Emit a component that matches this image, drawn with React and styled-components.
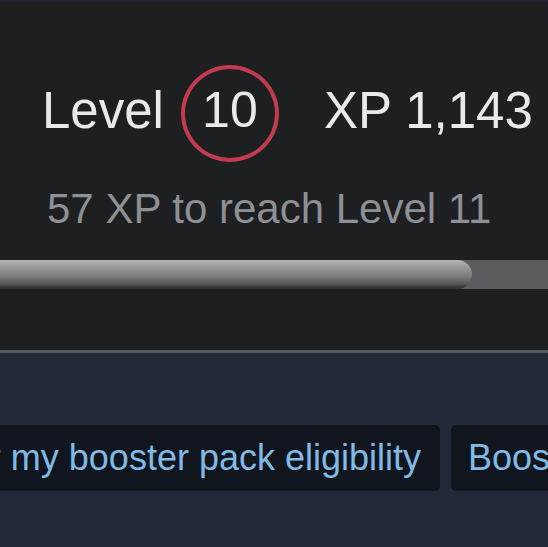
import React from "react";
import styled, { createGlobalStyle } from "styled-components";

const Global = createGlobalStyle`
  html, body { margin: 0; padding: 0; background: #222a3a; }
  body { font-family: "Liberation Sans", Arial, sans-serif; overflow: hidden; }
`;

const Page = styled.div`
  width: 548px;
  height: 547px;
  overflow: hidden;
  display: flex;
  flex-direction: column;
  background: #222a3a;
`;

const TopStrip = styled.div`
  height: 2px;
  background: #1d2434;
`;

const LevelPanel = styled.section`
  background: #1e1f21;
  padding: 63px 0 61px;
  display: flex;
  flex-direction: column;
`;

const LevelRow = styled.div`
  display: flex;
  align-items: center;
  height: 97px;
  padding-left: 42px;
`;

const BigText = styled.span`
  font-size: 51px;
  line-height: 1;
  color: #e9e9e9;
  white-space: nowrap;
  margin-bottom: 7px;
  margin-left: ${(p) => p.$gap || 0}px;
`;

const LevelCircle = styled.div`
  box-sizing: border-box;
  width: 98px;
  height: 97px;
  margin-left: 17px;
  border: 4.5px solid #c23b4f;
  border-radius: 50%;
  display: flex;
  align-items: center;
  justify-content: center;
  padding-bottom: 7px;
  font-size: 50px;
  line-height: 1;
  color: #e9e9e9;
`;

const SubText = styled.div`
  margin-top: 23px;
  padding-left: 47px;
  font-size: 42px;
  line-height: 48px;
  color: #8d9095;
  white-space: nowrap;
`;

const Track = styled.div`
  margin-top: 27px;
  height: 29px;
  background: #5a5a5f;
  display: flex;
`;

const Fill = styled.div`
  height: 100%;
  border-radius: 0 15px 15px 0;
  background: linear-gradient(
    to bottom,
    #b4b4b4 0%,
    #9a9a9a 25%,
    #7c7c7c 55%,
    #5a5a5a 82%,
    #3c3c3c 92%,
    #2e2e2e 100%
  );
`;

const Divider = styled.div`
  height: 3px;
  background: #535b5b;
`;

const ActionArea = styled.section`
  flex: 1;
  background: #222a3a;
  padding-top: 72px;
`;

const ButtonStrip = styled.div`
  display: grid;
  grid-template-columns: 440px 1fr;
  column-gap: 11px;
  height: 66px;
`;

const Cell = styled.div`
  display: flex;
  justify-content: ${(p) => (p.$end ? "flex-end" : "flex-start")};
  overflow: hidden;
`;

const ActionButton = styled.div`
  flex-shrink: 0;
  height: 66px;
  box-sizing: border-box;
  display: flex;
  align-items: center;
  padding: 0 19px 0 17px;
  background: #11151d;
  border-radius: 5px;
  font-size: 36px;
  color: #80bbe6;
  white-space: nowrap;
`;

export default function App() {
  const progress = 472;
  return (
    <Page>
      <Global />
      <TopStrip />
      <LevelPanel>
        <LevelRow>
          <BigText>Level</BigText>
          <LevelCircle>10</LevelCircle>
          <BigText $gap={45}>XP 1,143</BigText>
        </LevelRow>
        <SubText>57 XP to reach Level 11</SubText>
        <Track>
          <Fill style={{ width: progress }} />
        </Track>
      </LevelPanel>
      <Divider />
      <ActionArea>
        <ButtonStrip>
          <Cell $end>
            <ActionButton>Monitor my booster pack eligibility</ActionButton>
          </Cell>
          <Cell>
            <ActionButton>Booster Pack Creator</ActionButton>
          </Cell>
        </ButtonStrip>
      </ActionArea>
    </Page>
  );
}
